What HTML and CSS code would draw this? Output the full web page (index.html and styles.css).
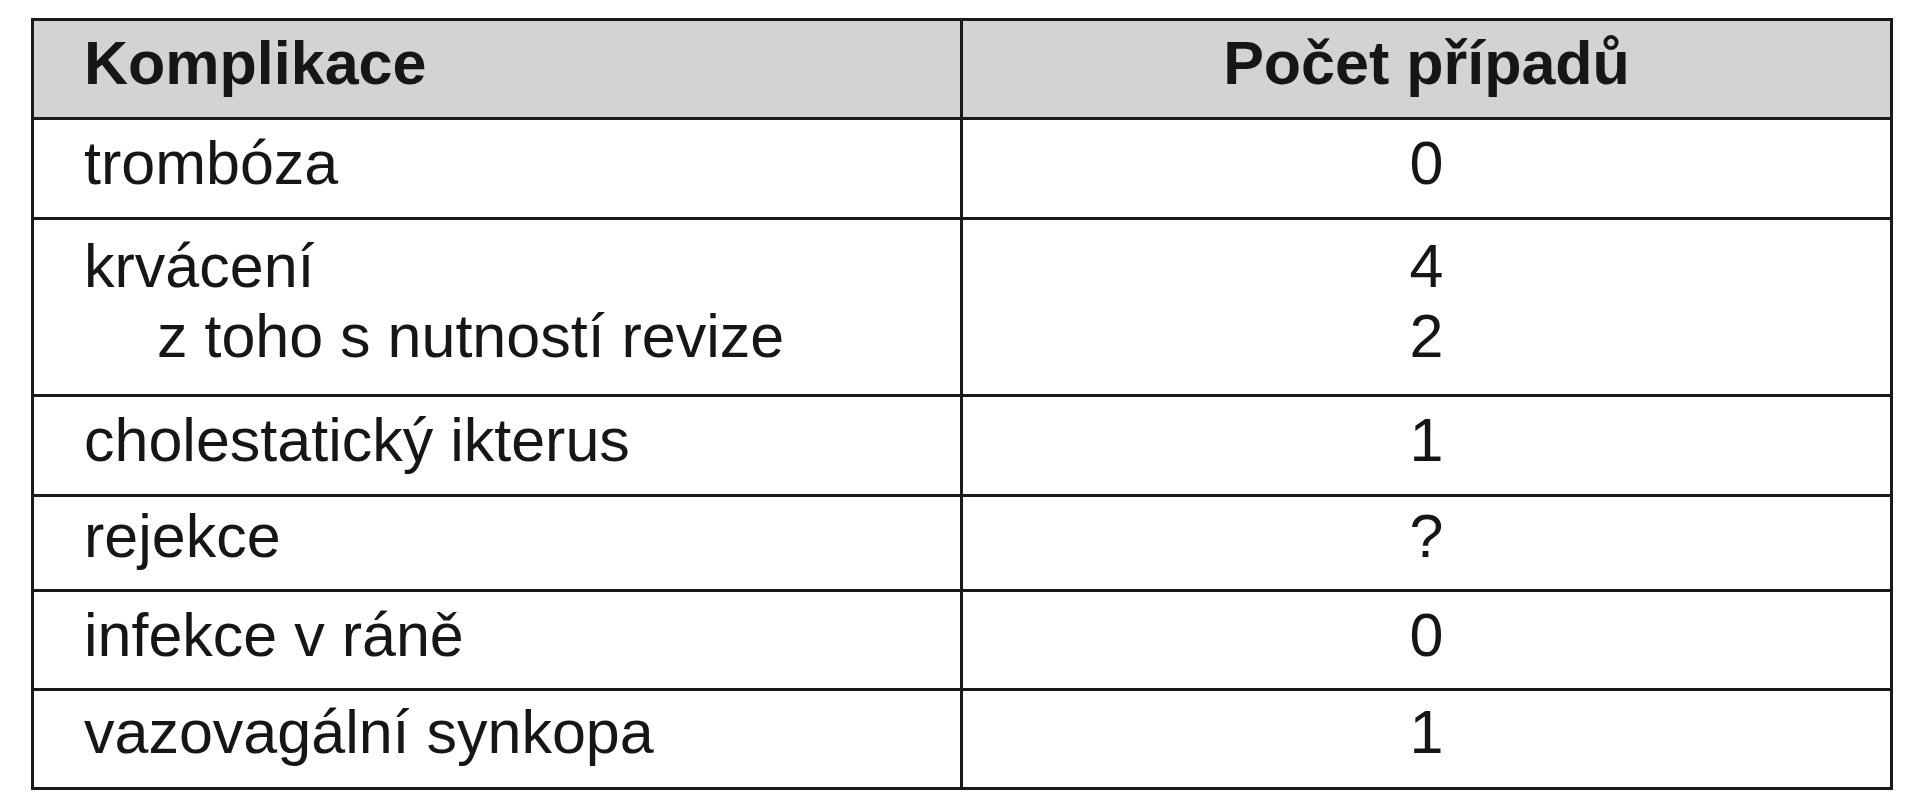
FILE: index.html
```html
<!DOCTYPE html>
<html lang="cs">
<head>
<meta charset="utf-8">
<title>Komplikace</title>
<link rel="stylesheet" href="styles.css">
</head>
<body>
<div class="table">
  <div class="cell head left">Komplikace</div>
  <div class="cell head right">Počet případů</div>

  <div class="cell left">trombóza</div>
  <div class="cell right">0</div>

  <div class="cell left tall"><div>krvácení</div><div class="sub">z toho s nutností revize</div></div>
  <div class="cell right tall"><div>4</div><div>2</div></div>

  <div class="cell left">cholestatický ikterus</div>
  <div class="cell right">1</div>

  <div class="cell left short">rejekce</div>
  <div class="cell right short">?</div>

  <div class="cell left mid">infekce v ráně</div>
  <div class="cell right mid">0</div>

  <div class="cell left last">vazovagální synkopa</div>
  <div class="cell right last">1</div>
</div>
</body>
</html>
```

FILE: styles.css
```css
html, body {
  margin: 0;
  padding: 0;
  background: #ffffff;
}

body {
  padding: 18px 0 0 31px;
  font-family: "Liberation Sans", Arial, sans-serif;
  color: #161616;
}

.table {
  width: 1862px;
  box-sizing: border-box;
  border: 3px solid #1a1a1a;
  display: grid;
  grid-template-columns: 929px 927px;
}

.cell {
  font-size: 61px;
  line-height: 70px;
  height: 100px;
  box-sizing: border-box;
  padding-top: 8px;
  border-bottom: 3px solid #1a1a1a;
  white-space: nowrap;
}

.left {
  border-right: 3px solid #1a1a1a;
  padding-left: 50px;
}

.right {
  text-align: center;
}

.head {
  background: #d3d3d5;
  font-weight: bold;
  height: 99px;
  padding-top: 7px;
}

.tall {
  height: 177px;
  padding-top: 11px;
}

.sub {
  padding-left: 73px;
}

.short {
  height: 95px;
  padding-top: 4px;
}

.mid {
  height: 99px;
}

.last {
  border-bottom: none;
  height: 96px;
  padding-top: 6px;
}
```
